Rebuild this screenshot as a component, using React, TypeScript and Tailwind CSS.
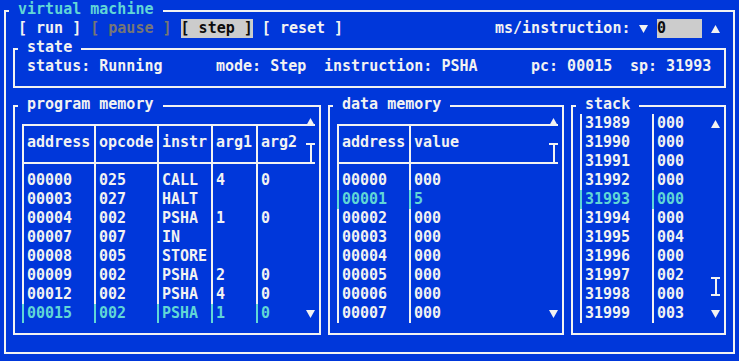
import React from 'react';

const LINE = 'border-[#f2f2f2]';
const CYAN = 'border-[#61d6d6] text-[#61d6d6]';

const program = [
  ['00000', '025', 'CALL', '4', '0'],
  ['00003', '027', 'HALT', '', ''],
  ['00004', '002', 'PSHA', '1', '0'],
  ['00007', '007', 'IN', '', ''],
  ['00008', '005', 'STORE', '', ''],
  ['00009', '002', 'PSHA', '2', '0'],
  ['00012', '002', 'PSHA', '4', '0'],
  ['00015', '002', 'PSHA', '1', '0'],
];
const programCols = [72, 63, 54, 45, 50];

const data = ['000', '5', '000', '000', '000', '000', '000', '000'].map((v, i) => [
  `0000${i}`,
  v,
]);
const dataCols = [72, 140];

const stack = [
  ['31989', '000'],
  ['31990', '000'],
  ['31991', '000'],
  ['31992', '000'],
  ['31993', '000'],
  ['31994', '000'],
  ['31995', '004'],
  ['31996', '000'],
  ['31997', '002'],
  ['31998', '000'],
  ['31999', '003'],
];
const stackCols = [72, 59];

function Tri({ up }: { up?: boolean }) {
  return (
    <svg width="9" height="8" viewBox="0 0 9 8" className="block">
      <path d={up ? 'M4.5 0L9 8H0Z' : 'M0 0H9L4.5 8Z'} fill="#f2f2f2" />
    </svg>
  );
}

function Panel({
  title,
  titleClass = '',
  className = '',
  children,
}: {
  title: string;
  titleClass?: string;
  className?: string;
  children?: React.ReactNode;
}) {
  return (
    <div className={`relative border-2 ${LINE} ${className}`}>
      <span
        className={`absolute left-[3px] top-[-12px] h-[19px] whitespace-pre bg-[#0037da] ${titleClass}`}
      >
        {` ${title} `}
      </span>
      {children}
    </div>
  );
}

// one table row: cells with a left rule, plus a 9px scrollbar cell
function Row({
  cells,
  widths,
  hl,
  h = 'h-[19px]',
  tail,
}: {
  cells: string[];
  widths: number[];
  hl?: boolean;
  h?: string;
  tail?: React.ReactNode;
}) {
  const tone = hl ? CYAN : LINE;
  return (
    <div className={`flex ${h}`}>
      {widths.map((w, i) => (
        <div
          key={i}
          style={{ width: w }}
          className={`border-l-2 pl-[3px] whitespace-pre ${tone}`}
        >
          {cells[i]}
        </div>
      ))}
      {tail !== undefined && (
        <div className="w-[9px] flex items-center justify-center">{tail}</div>
      )}
    </div>
  );
}

function Thumb() {
  return (
    <div className="flex flex-col items-center">
      <div className="w-[9px] h-[2px] bg-[#f2f2f2]" />
      <div className="w-[2px] h-[17px] bg-[#f2f2f2]" />
    </div>
  );
}

function Table({
  head,
  rows,
  widths,
  hl,
  width,
}: {
  head: string[];
  rows: string[][];
  widths: number[];
  hl: number;
  width: string;
}) {
  return (
    <div className={`relative ${width} border-t-2 ${LINE}`}>
      <div className="absolute right-0 top-[-8px]">
        <Tri up />
      </div>
      <div className={`flex h-[38px] border-b-2 ${LINE}`}>
        {widths.map((w, i) => (
          <div
            key={i}
            style={{ width: w }}
            className={`border-l-2 pl-[3px] pt-[7px] ${LINE}`}
          >
            {head[i]}
          </div>
        ))}
        <div className="w-[9px] pt-[17px]">
          <Thumb />
        </div>
      </div>
      <Row cells={[]} widths={widths} h="h-[7px]" />
      {rows.map((r, i) => (
        <Row
          key={i}
          cells={r}
          widths={widths}
          hl={i === hl}
          tail={i === rows.length - 1 ? <Tri /> : null}
        />
      ))}
    </div>
  );
}

export default function App() {
  return (
    <div className="w-[739px] h-[361px] overflow-hidden bg-[#0037da] pl-[4px] pt-[10px] font-['DejaVu_Sans_Mono',monospace] font-bold text-[15px] leading-[19px] text-[#f2f2f2]">
      <Panel title="virtual machine" titleClass="text-[#61d6d6]" className="w-[731px] h-[344px] pt-[7px]">
        {/* controls */}
        <div className="flex h-[19px] justify-between pl-[12px] pr-[13px]">
          <div className="flex whitespace-pre">
            <span>[ run ] </span>
            <span className="text-[#767676]">[ pause ] </span>
            <span className="bg-[#cccccc] text-[#0c0c0c]">[ step ]</span>
            <span> [ reset ]</span>
          </div>
          <div className="flex items-center">
            <span className="w-[144px] whitespace-pre">ms/instruction: </span>
            <div className="w-[9px] flex justify-center">
              <Tri />
            </div>
            <div className="w-[9px]" />
            <div className="w-[45px] h-[19px] bg-[#cccccc] text-[#0c0c0c]">0</div>
            <div className="w-[9px]" />
            <div className="w-[9px] flex justify-center">
              <Tri up />
            </div>
          </div>
        </div>

        <Panel title="state" className="ml-[7px] mt-[10px] w-[713px] h-[40px] pt-[7px] pl-[12px]">
          <div className="flex whitespace-pre">
            <span className="w-[189px]">status: Running</span>
            <span className="w-[108px]">mode: Step</span>
            <span className="w-[207px]">instruction: PSHA</span>
            <span className="w-[99px]">pc: 00015</span>
            <span>sp: 31993</span>
          </div>
        </Panel>

        <div className="flex gap-[7px] ml-[7px] mt-[17px]">
          <Panel title="program memory" className="w-[308px] h-[230px] pt-[17px] pl-[7px]">
            <Table
              head={['address', 'opcode', 'instr', 'arg1', 'arg2']}
              rows={program}
              widths={programCols}
              hl={7}
              width="w-[293px]"
            />
          </Panel>

          <Panel title="data memory" className="w-[236px] h-[230px] pt-[17px] pl-[7px]">
            <Table head={['address', 'value']} rows={data} widths={dataCols} hl={1} width="w-[221px]" />
          </Panel>

          <Panel title="stack" className="w-[155px] h-[230px] pt-[7px] pl-[7px]">
            <div className="flex">
              <div>
                {stack.map((r, i) => (
                  <Row key={i} cells={r} widths={stackCols} hl={i === 4} />
                ))}
              </div>
              <div className="w-[9px] flex flex-col items-center">
                <div className="h-[19px] flex items-center">
                  <Tri up />
                </div>
                <div className="mt-[144px] h-[19px] flex flex-col items-center">
                  <div className="w-[9px] h-[2px] bg-[#f2f2f2]" />
                  <div className="w-[2px] h-[15px] bg-[#f2f2f2]" />
                  <div className="w-[9px] h-[2px] bg-[#f2f2f2]" />
                </div>
                <div className="mt-[8px] h-[19px] flex items-center">
                  <Tri />
                </div>
              </div>
            </div>
          </Panel>
        </div>
      </Panel>
    </div>
  );
}
